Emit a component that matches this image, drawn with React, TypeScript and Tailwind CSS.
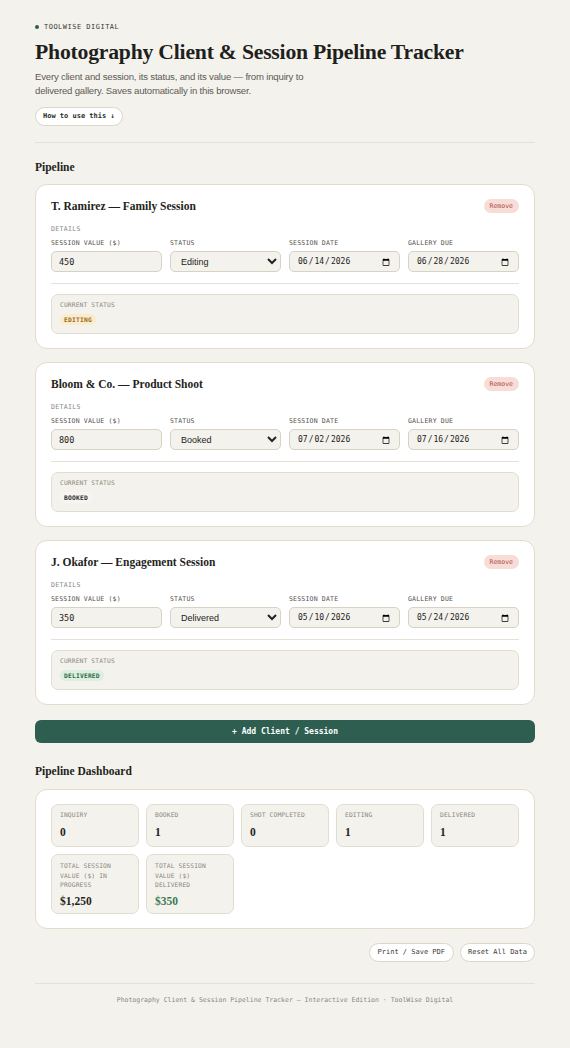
import { useState } from 'react';

type Status = 'Inquiry' | 'Booked' | 'Shot Completed' | 'Editing' | 'Delivered';

type Session = {
  id: number;
  name: string;
  value: string;
  status: Status;
  date: string;
  due: string;
};

const STATUSES: Status[] = ['Inquiry', 'Booked', 'Shot Completed', 'Editing', 'Delivered'];

const badgeClass: Record<Status, string> = {
  Inquiry: 'bg-[#e8eef6] text-[#3d5a80]',
  Booked: 'bg-[#f7f5f0] text-[#2b2b2b]',
  'Shot Completed': 'bg-[#ece7f5] text-[#5b4a8a]',
  Editing: 'bg-[#fbeccd] text-[#9a6a22]',
  Delivered: 'bg-[#dcefe1] text-[#2f6b47]',
};

const initial: Session[] = [
  { id: 1, name: 'T. Ramirez — Family Session', value: '450', status: 'Editing', date: '2026-06-14', due: '2026-06-28' },
  { id: 2, name: 'Bloom & Co. — Product Shoot', value: '800', status: 'Booked', date: '2026-07-02', due: '2026-07-16' },
  { id: 3, name: 'J. Okafor — Engagement Session', value: '350', status: 'Delivered', date: '2026-05-10', due: '2026-05-24' },
];

const mono = 'font-["DejaVu_Sans_Mono",monospace]';
const serif = 'font-["Liberation_Serif",serif]';
const fieldLabel = `block text-[6.5px] leading-[8px] tracking-[0.03em] text-[#55524c] ${mono}`;
const fieldBox = 'mt-[4px] h-[21px] rounded-[5px] bg-[#f4f2ec] border border-[#d8d1c4] text-[#222] outline-none';
const smallLabel = `text-[6.3px] leading-[8px] tracking-[0.02em] text-[#8a877f] ${mono}`;

export default function App() {
  const [sessions, setSessions] = useState<Session[]>(initial);

  const update = (id: number, patch: Partial<Session>) =>
    setSessions(s => s.map(x => (x.id === id ? { ...x, ...patch } : x)));

  const count = (st: Status) => sessions.filter(s => s.status === st).length;
  const inProgress = sessions.filter(s => s.status !== 'Delivered').reduce((a, s) => a + (Number(s.value) || 0), 0);
  const delivered = sessions.filter(s => s.status === 'Delivered').reduce((a, s) => a + (Number(s.value) || 0), 0);

  return (
    <div className="min-h-screen bg-[#f4f2ed] text-[#1f1f1c] font-['Liberation_Sans',sans-serif]">
      <div className="px-[35px] pt-[22px] pb-10">
        {/* header */}
        <div className={`flex items-center gap-[5px] h-[10px] text-[7px] tracking-[0.07em] text-[#3a3a36] ${mono}`}>
          <span className="w-[4px] h-[4px] rounded-full bg-[#2d5e4f]" />
          TOOLWISE DIGITAL
        </div>
        <h1 className={`mt-[6px] text-[21.7px] leading-[28px] font-bold tracking-[-0.01em] ${serif}`}>
          Photography Client &amp; Session Pipeline Tracker
        </h1>
        <p className="mt-[4px] text-[9.6px] leading-[14px] tracking-[-0.02em] text-[#5d5a54] max-w-[290px]">
          Every client and session, its status, and its value — from inquiry to delivered gallery. Saves automatically in this browser.
        </p>
        <button className={`mt-[9px] h-[19px] px-[7px] rounded-full bg-white border border-[#ddd6ca] text-[7px] font-bold text-[#2b2b28] ${mono}`}>
          How to use this ↓
        </button>

        <div className="mt-[16px] border-t border-[#e6e1d8]" />

        <h2 className={`mt-[16px] text-[11.5px] leading-[16px] font-bold ${serif}`}>Pipeline</h2>

        <div className="mt-[9px] flex flex-col gap-[13px]">
          {sessions.map(s => (
            <div key={s.id} className="bg-white border border-[#e3dccd] rounded-[12px] px-[15px] pt-[13px] pb-[14px]">
              <div className="flex items-center justify-between h-[16px]">
                <div className={`text-[11.5px] leading-[16px] font-bold ${serif}`}>{s.name}</div>
                <button
                  onClick={() => setSessions(x => x.filter(y => y.id !== s.id))}
                  className={`h-[14px] px-[6px] rounded-full bg-[#f7dcd8] text-[6.5px] leading-[14px] text-[#b04c42] ${mono}`}
                >
                  Remove
                </button>
              </div>
              <div className={`mt-[11px] text-[6.5px] leading-[8px] tracking-[0.05em] text-[#8a877f] ${mono}`}>DETAILS</div>
              <div className="mt-[6px] grid grid-cols-4 gap-[8px]">
                <label className="flex flex-col">
                  <span className={fieldLabel}>SESSION VALUE ($)</span>
                  <input
                    value={s.value}
                    onChange={e => update(s.id, { value: e.target.value })}
                    className={`${fieldBox} px-[7px] text-[8.5px] ${mono}`}
                  />
                </label>
                <label className="flex flex-col">
                  <span className={fieldLabel}>STATUS</span>
                  <select
                    value={s.status}
                    onChange={e => update(s.id, { status: e.target.value as Status })}
                    className={`${fieldBox} px-[6px] text-[9px]`}
                  >
                    {STATUSES.map(st => (
                      <option key={st}>{st}</option>
                    ))}
                  </select>
                </label>
                <label className="flex flex-col">
                  <span className={fieldLabel}>SESSION DATE</span>
                  <input
                    type="date"
                    value={s.date}
                    onChange={e => update(s.id, { date: e.target.value })}
                    className={`${fieldBox} px-[7px] text-[8px] ${mono}`}
                  />
                </label>
                <label className="flex flex-col">
                  <span className={fieldLabel}>GALLERY DUE</span>
                  <input
                    type="date"
                    value={s.due}
                    onChange={e => update(s.id, { due: e.target.value })}
                    className={`${fieldBox} px-[7px] text-[8px] ${mono}`}
                  />
                </label>
              </div>
              <div className="mt-[11px] border-t border-[#e6e1d8]" />
              <div className="mt-[10px] rounded-[7px] bg-[#f4f2ec] border border-[#e3ddd1] px-[8px] pt-[6px] pb-[8px]">
                <div className={smallLabel}>CURRENT STATUS</div>
                <div className="mt-[5px] flex">
                  <span className={`rounded-full px-[4px] h-[11px] text-[6.3px] leading-[11px] font-bold tracking-[0.03em] ${mono} ${badgeClass[s.status]}`}>
                    {s.status.toUpperCase()}
                  </span>
                </div>
              </div>
            </div>
          ))}
        </div>

        <button
          onClick={() =>
            setSessions(x => [
              ...x,
              { id: Date.now(), name: 'New Client — Session', value: '0', status: 'Inquiry', date: '', due: '' },
            ])
          }
          className={`mt-[15px] w-full h-[23px] rounded-[6px] bg-[#2d5e4f] text-white text-[8px] font-bold ${mono}`}
        >
          + Add Client / Session
        </button>

        <h2 className={`mt-[20px] text-[11.5px] leading-[16px] font-bold ${serif}`}>Pipeline Dashboard</h2>

        <div className="mt-[10px] bg-white border border-[#e3dccd] rounded-[12px] px-[15px] py-[14px]">
          <div className="grid grid-cols-5 gap-[7px]">
            {STATUSES.map(st => (
              <div key={st} className="rounded-[7px] bg-[#f4f2ec] border border-[#e3ddd1] px-[8px] pt-[6px] h-[43px]">
                <div className={smallLabel}>{st.toUpperCase()}</div>
                <div className={`mt-[6px] text-[11.5px] font-bold leading-[15px] ${serif}`}>{count(st)}</div>
              </div>
            ))}
            <div className="rounded-[7px] bg-[#f4f2ec] border border-[#e3ddd1] px-[8px] pt-[6px] h-[60px]">
              <div className={`${smallLabel} leading-[9.5px]`}>TOTAL SESSION VALUE ($) IN PROGRESS</div>
              <div className={`mt-[4px] text-[11.5px] font-bold leading-[15px] ${serif}`}>${inProgress.toLocaleString('en-US')}</div>
            </div>
            <div className="rounded-[7px] bg-[#f4f2ec] border border-[#e3ddd1] px-[8px] pt-[6px] h-[60px]">
              <div className={`${smallLabel} leading-[9.5px]`}>TOTAL SESSION VALUE ($) DELIVERED</div>
              <div className={`mt-[4px] text-[11.5px] font-bold leading-[15px] text-[#3b7a52] ${serif}`}>${delivered.toLocaleString('en-US')}</div>
            </div>
          </div>
        </div>

        <div className="mt-[14px] flex justify-end gap-[6px]">
          <button className={`h-[19px] px-[8px] rounded-full bg-white border border-[#ddd6ca] text-[7px] text-[#3a3a36] ${mono}`}>
            Print / Save PDF
          </button>
          <button className={`h-[19px] px-[7px] rounded-full bg-white border border-[#ddd6ca] text-[7px] text-[#3a3a36] ${mono}`}>
            Reset All Data
          </button>
        </div>

        <div className="mt-[21px] border-t border-[#e6e1d8]" />
        <p className={`mt-[11px] text-center text-[6.5px] leading-[10px] text-[#8a877f] ${mono}`}>
          Photography Client &amp; Session Pipeline Tracker — Interactive Edition · ToolWise Digital
        </p>
      </div>
    </div>
  );
}
